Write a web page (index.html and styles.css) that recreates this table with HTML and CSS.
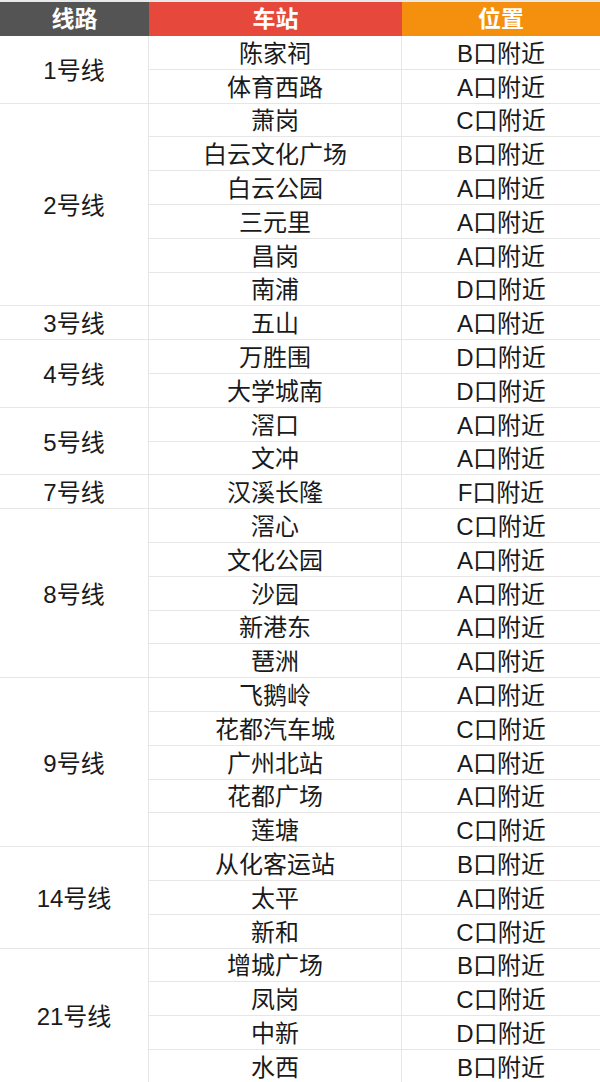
FILE: index.html
```html
<!DOCTYPE html>
<html lang="zh-CN">
<head>
<meta charset="utf-8">
<title>线路车站位置</title>
<link rel="stylesheet" href="styles.css">
</head>
<body>
<div class="sheet">
  <div class="head">
    <div class="hc line">线路</div>
    <div class="hc station">车站</div>
    <div class="hc pos">位置</div>
  </div>
  <div class="grid">
    <div class="c l" style="grid-row: 1 / span 2">1号线</div>
    <div class="c s">陈家祠</div><div class="c p">B口附近</div>
    <div class="c s">体育西路</div><div class="c p">A口附近</div>

    <div class="c l" style="grid-row: 3 / span 6">2号线</div>
    <div class="c s">萧岗</div><div class="c p">C口附近</div>
    <div class="c s">白云文化广场</div><div class="c p">B口附近</div>
    <div class="c s">白云公园</div><div class="c p">A口附近</div>
    <div class="c s">三元里</div><div class="c p">A口附近</div>
    <div class="c s">昌岗</div><div class="c p">A口附近</div>
    <div class="c s">南浦</div><div class="c p">D口附近</div>

    <div class="c l" style="grid-row: 9 / span 1">3号线</div>
    <div class="c s">五山</div><div class="c p">A口附近</div>

    <div class="c l" style="grid-row: 10 / span 2">4号线</div>
    <div class="c s">万胜围</div><div class="c p">D口附近</div>
    <div class="c s">大学城南</div><div class="c p">D口附近</div>

    <div class="c l" style="grid-row: 12 / span 2">5号线</div>
    <div class="c s">滘口</div><div class="c p">A口附近</div>
    <div class="c s">文冲</div><div class="c p">A口附近</div>

    <div class="c l" style="grid-row: 14 / span 1">7号线</div>
    <div class="c s">汉溪长隆</div><div class="c p">F口附近</div>

    <div class="c l" style="grid-row: 15 / span 5">8号线</div>
    <div class="c s">滘心</div><div class="c p">C口附近</div>
    <div class="c s">文化公园</div><div class="c p">A口附近</div>
    <div class="c s">沙园</div><div class="c p">A口附近</div>
    <div class="c s">新港东</div><div class="c p">A口附近</div>
    <div class="c s">琶洲</div><div class="c p">A口附近</div>

    <div class="c l" style="grid-row: 20 / span 5">9号线</div>
    <div class="c s">飞鹅岭</div><div class="c p">A口附近</div>
    <div class="c s">花都汽车城</div><div class="c p">C口附近</div>
    <div class="c s">广州北站</div><div class="c p">A口附近</div>
    <div class="c s">花都广场</div><div class="c p">A口附近</div>
    <div class="c s">莲塘</div><div class="c p">C口附近</div>

    <div class="c l" style="grid-row: 25 / span 3">14号线</div>
    <div class="c s">从化客运站</div><div class="c p">B口附近</div>
    <div class="c s">太平</div><div class="c p">A口附近</div>
    <div class="c s">新和</div><div class="c p">C口附近</div>

    <div class="c l" style="grid-row: 28 / span 4">21号线</div>
    <div class="c s">增城广场</div><div class="c p">B口附近</div>
    <div class="c s">凤岗</div><div class="c p">C口附近</div>
    <div class="c s">中新</div><div class="c p">D口附近</div>
    <div class="c s">水西</div><div class="c p">B口附近</div>
  </div>
</div>
</body>
</html>
```

FILE: styles.css
```css
html, body {
  margin: 0;
  padding: 0;
  background: #ffffff;
}

body {
  font-family: "Liberation Sans", "Noto Sans CJK SC", sans-serif;
  color: #1a1a1a;
  overflow: hidden;
}

.sheet {
  width: 600px;
  border-top: 2px solid #e9e9e9;
}

.head {
  display: grid;
  grid-template-columns: 149px 253px 198px;
  height: 34px;
}

.hc {
  display: flex;
  align-items: center;
  justify-content: center;
  padding-top: 1px;
  color: #ffffff;
  font-weight: bold;
  font-size: 23px;
  line-height: 1;
}

.hc.line { background: #545454; }
.hc.station { background: #e6483b; }
.hc.pos { background: #f5900f; }

.grid {
  display: grid;
  grid-template-columns: 148px 252px 198px;
  grid-auto-rows: 32.8px;
  column-gap: 1px;
  row-gap: 1px;
  background: #e6e6e6;
  padding-bottom: 1px;
}

.c {
  background: #ffffff;
  display: flex;
  align-items: center;
  justify-content: center;
  padding-top: 3px;
  font-size: 24px;
  line-height: 1;
  white-space: nowrap;
}

.l { grid-column: 1; }
.s { grid-column: 2; }
.p { grid-column: 3; }
```
